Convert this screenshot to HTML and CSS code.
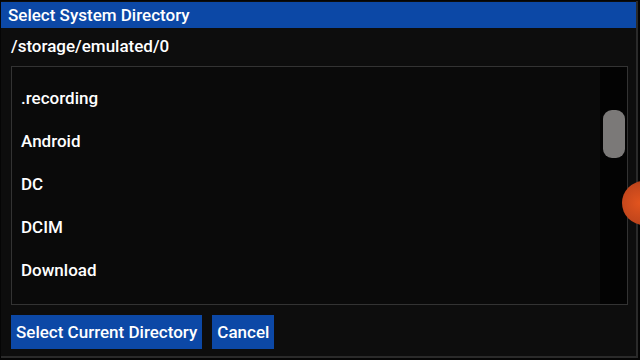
FILE: index.html
```html
<!DOCTYPE html>
<html>
<head>
<meta charset="utf-8">
<link rel="stylesheet" href="styles.css">
</head>
<body>
<div class="screen">
  <div class="dialog">
    <div class="title">Select System Directory</div>
    <div class="path">/storage/emulated/0</div>
    <div class="listbox">
      <ul class="list">
        <li>.recording</li>
        <li>Android</li>
        <li>DC</li>
        <li>DCIM</li>
        <li>Download</li>
      </ul>
      <div class="track"><div class="thumb"></div></div>
    </div>
    <div class="actions">
      <button class="btn">Select Current Directory</button>
      <button class="btn">Cancel</button>
    </div>
  </div>
  <div class="fab"></div>
</div>
</body>
</html>
```
FILE: styles.css
```css
* { box-sizing: border-box; }
html, body { margin: 0; padding: 0; background: #050505; }
body { width: 640px; height: 360px; overflow: hidden; font-family: Roboto, "Noto Sans", sans-serif; }
.screen { position: relative; width: 640px; height: 360px; padding: 1px 2px 2px 1px; }
.dialog {
  height: 357px;
  background: #0d0d0d;
  border-right: 2px solid #2a2a2a;
  border-bottom: 2px solid #2a2a2a;
  display: flex;
  flex-direction: column;
}
.title {
  background: #0c48a6;
  color: #fff;
  font-size: 17px;
  font-weight: 500;
  height: 26px;
  line-height: 26px;
  padding-left: 7px;
  margin-top: 1px;
}
.path {
  color: #fff;
  font-size: 17px;
  font-weight: 500;
  padding: 8px 0 0 10px;
  height: 38px;
}
.listbox {
  margin-left: 10px;
  width: 617px;
  height: 239px;
  border: 1px solid #333;
  background: #0a0a0a;
  display: flex;
}
.list { list-style: none; margin: 0; padding: 10px 0 0 9px; flex: 1; }
.list li {
  color: #fff;
  font-size: 17px;
  font-weight: 500;
  height: 43px;
  line-height: 43px;
}
.track { width: 27px; background: #030303; padding: 43px 0 0 3px; }
.thumb { width: 22px; height: 48px; border-radius: 9px; background: #7b7978; }
.actions { display: flex; gap: 10px; padding: 10px 0 0 10px; }
.btn {
  background: #0c48a6;
  color: #fff;
  border: 0;
  font-family: Roboto, "Noto Sans", sans-serif;
  font-size: 17px;
  font-weight: 500;
  height: 34px;
  padding: 0 5px;
}
.fab {
  position: absolute;
  left: 622px;
  top: 181px;
  width: 44px;
  height: 44px;
  border-radius: 50%;
  background: radial-gradient(circle at 40% 50%, #e2541e 0%, #c2461c 55%, #6a2410 100%);
}
```
